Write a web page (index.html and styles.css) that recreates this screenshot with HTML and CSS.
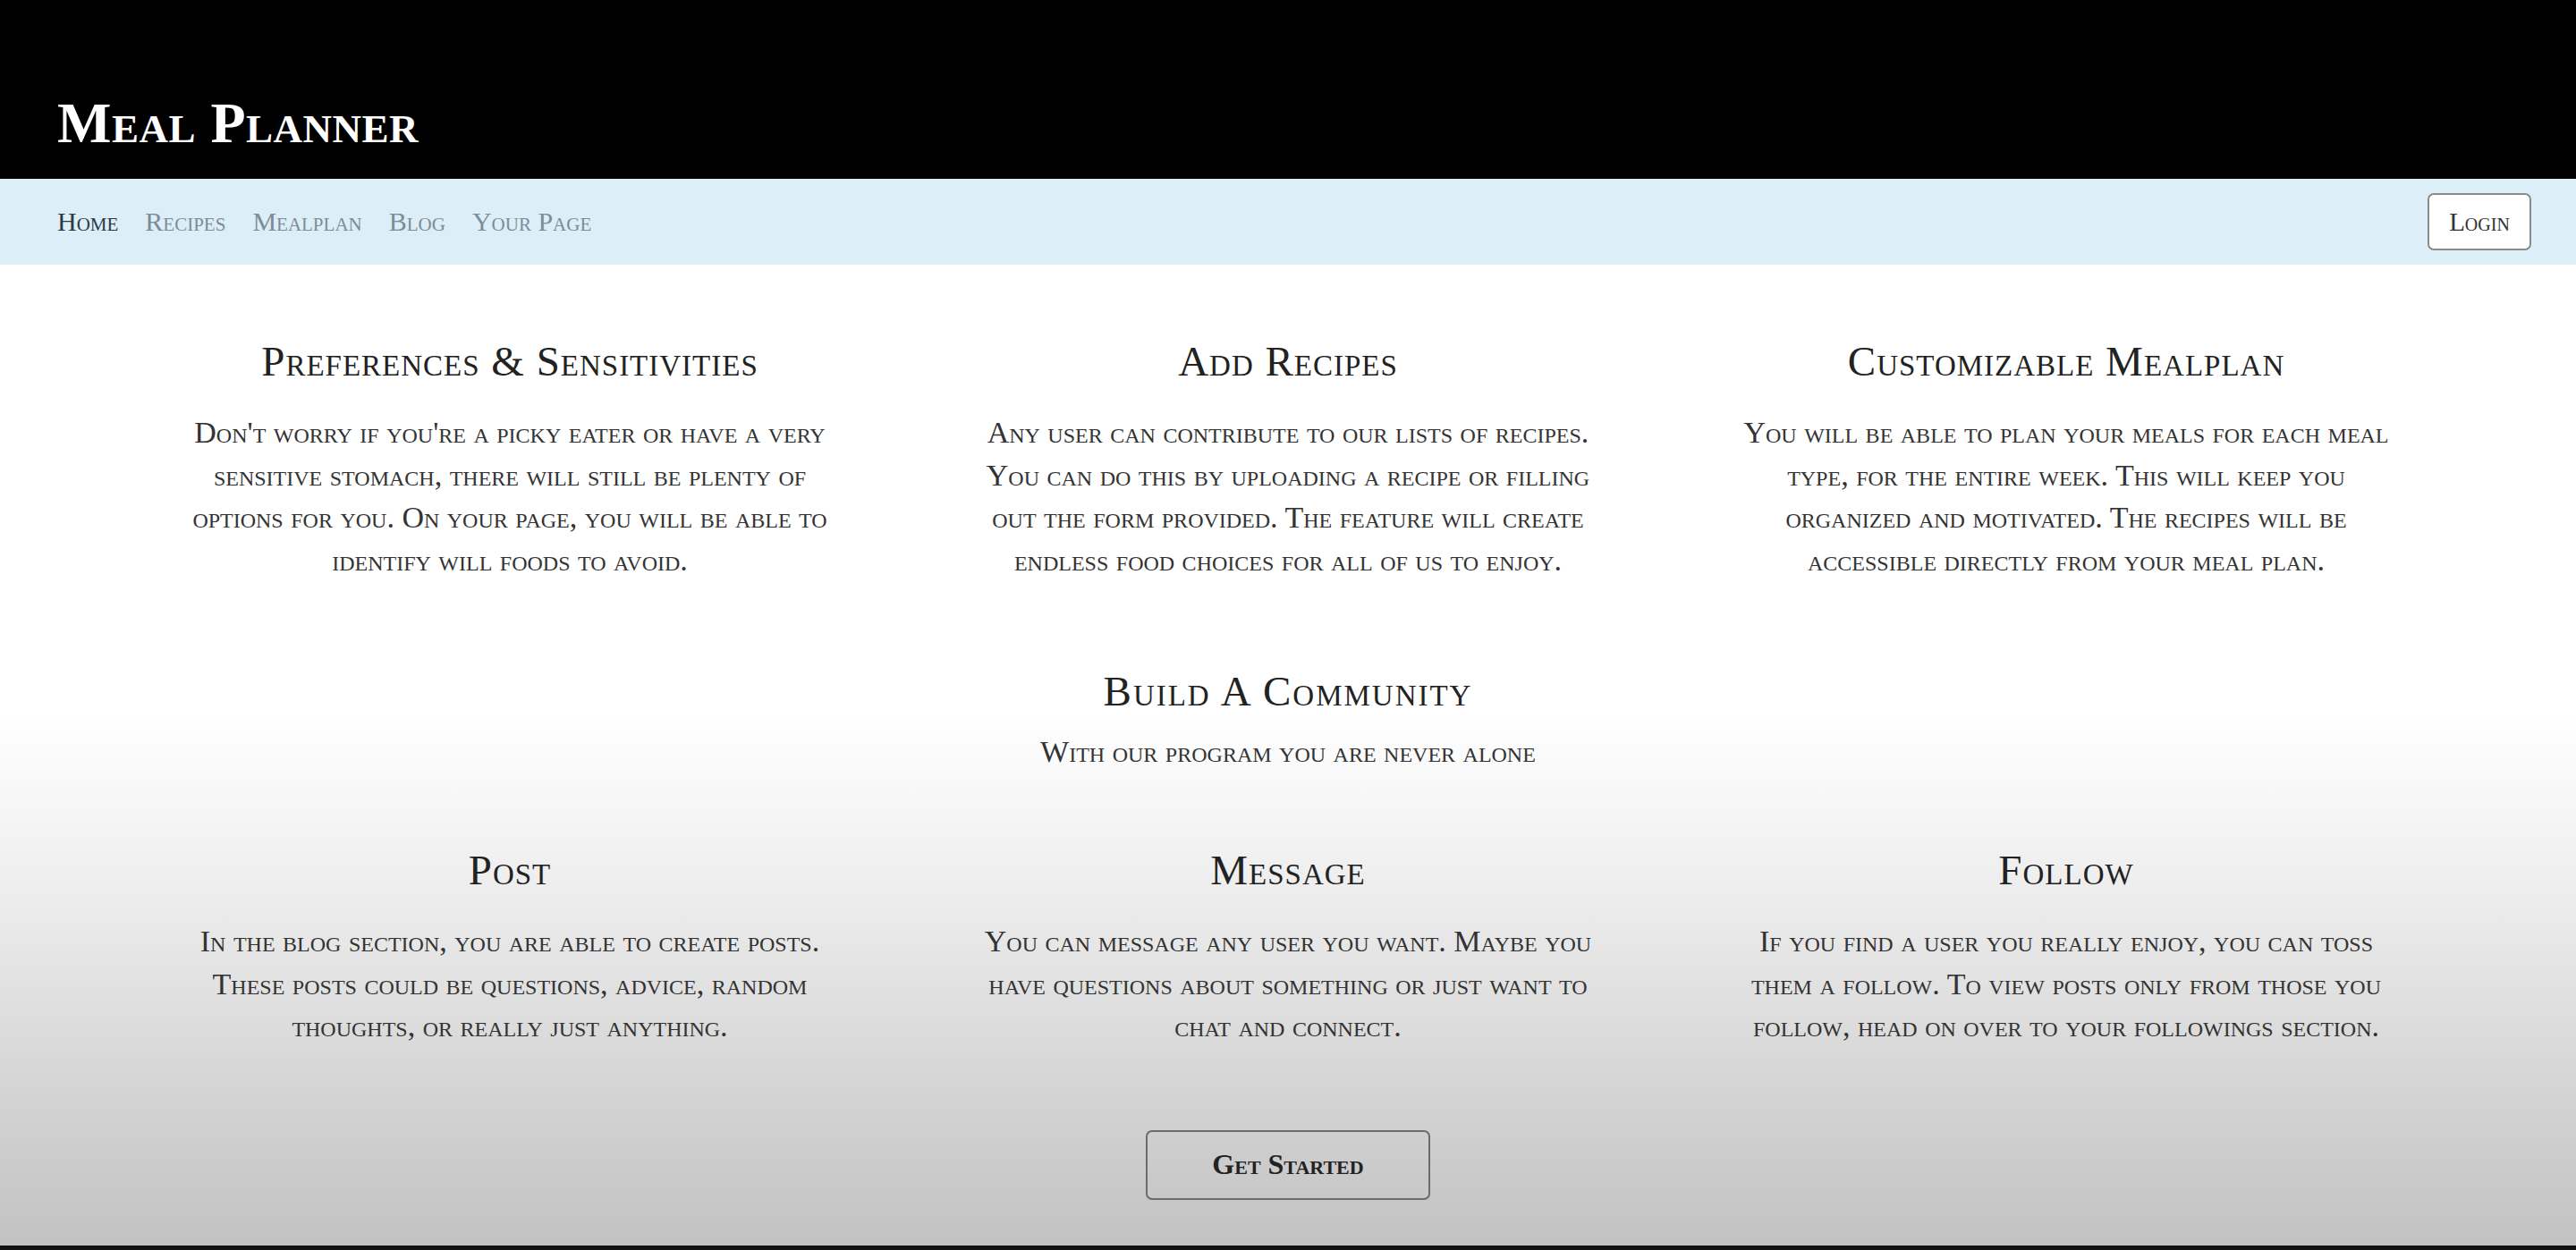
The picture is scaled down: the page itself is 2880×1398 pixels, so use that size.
FILE: index.html
```html
<!DOCTYPE html>
<html lang="en">
<head>
<meta charset="utf-8">
<title>Meal Planner</title>
<link rel="stylesheet" href="styles.css">
</head>
<body>
<div class="page">
  <header class="masthead">
    <h1 class="brand">Meal Planner</h1>
  </header>
  <nav class="navbar">
    <ul class="nav-links">
      <li><a class="nav-link active" href="#">Home</a></li>
      <li><a class="nav-link" href="#">Recipes</a></li>
      <li><a class="nav-link" href="#">Mealplan</a></li>
      <li><a class="nav-link" href="#">Blog</a></li>
      <li><a class="nav-link" href="#">Your Page</a></li>
    </ul>
    <button class="login-btn" type="button">Login</button>
  </nav>
  <main class="content">
    <section class="features">
      <div class="feature">
        <h2 class="feature-title">Preferences &amp; Sensitivities</h2>
        <p class="feature-text">Don't worry if you're a picky eater or have a very sensitive stomach, there will still be plenty of options for you. On your page, you will be able to identify will foods to avoid.</p>
      </div>
      <div class="feature">
        <h2 class="feature-title">Add Recipes</h2>
        <p class="feature-text">Any user can contribute to our lists of recipes. You can do this by uploading a recipe or filling out the form provided. The feature will create endless food choices for all of us to enjoy.</p>
      </div>
      <div class="feature">
        <h2 class="feature-title">Customizable Mealplan</h2>
        <p class="feature-text">You will be able to plan your meals for each meal type, for the entire week. This will keep you organized and motivated. The recipes will be accessible directly from your meal plan.</p>
      </div>
    </section>
    <section class="community">
      <h2 class="feature-title">Build A Community</h2>
      <p class="community-sub">With our program you are never alone</p>
    </section>
    <section class="features features-second">
      <div class="feature">
        <h2 class="feature-title">Post</h2>
        <p class="feature-text">In the blog section, you are able to create posts. These posts could be questions, advice, random thoughts, or really just anything.</p>
      </div>
      <div class="feature">
        <h2 class="feature-title">Message</h2>
        <p class="feature-text">You can message any user you want. Maybe you have questions about something or just want to chat and connect.</p>
      </div>
      <div class="feature">
        <h2 class="feature-title">Follow</h2>
        <p class="feature-text">If you find a user you really enjoy, you can toss them a follow. To view posts only from those you follow, head on over to your followings section.</p>
      </div>
    </section>
    <div class="cta">
      <button class="cta-btn" type="button">Get Started</button>
    </div>
  </main>
  <footer class="bottom-bar"></footer>
</div>
</body>
</html>
```

FILE: styles.css
```css
* { box-sizing: border-box; }

html, body {
  margin: 0;
  padding: 0;
}

body {
  font-family: "Liberation Serif", "Times New Roman", serif;
  font-variant: small-caps;
  color: #2f2f2f;
  background: #000;
}

.page {
  min-height: 100vh;
  display: flex;
  flex-direction: column;
}

.masthead {
  background: #000;
  height: 200px;
  display: flex;
  align-items: flex-end;
  padding: 0 0 30px 64px;
}

.brand {
  margin: 0;
  color: #fff;
  font-size: 64px;
  font-weight: bold;
  line-height: 1;
  letter-spacing: 0.5px;
}

.navbar {
  background: #dceef8;
  height: 96px;
  display: flex;
  align-items: center;
  justify-content: space-between;
  padding: 0 50px 0 64px;
}

.nav-links {
  list-style: none;
  margin: 0;
  padding: 0;
  display: flex;
  gap: 30px;
}

.nav-link {
  font-size: 30px;
  color: #7d8c97;
  text-decoration: none;
}

.nav-link.active {
  color: #2c3a42;
}

.login-btn {
  font-family: inherit;
  font-variant: small-caps;
  font-size: 29px;
  color: #333;
  background: #fff;
  border: 2px solid #8a8a8a;
  border-radius: 7px;
  width: 116px;
  height: 64px;
  padding: 0;
}

.content {
  flex: 1;
  background: linear-gradient(to bottom, #ffffff 0%, #ffffff 46%, #ececec 65%, #d3d3d3 85%, #c2c2c2 100%);
  padding-top: 82px;
  display: flex;
  flex-direction: column;
}

.features {
  display: grid;
  grid-template-columns: repeat(3, 870px);
  justify-content: center;
}

.feature {
  text-align: center;
  padding: 0 72px;
}

.feature-title {
  margin: 0 0 30px;
  font-size: 47px;
  font-weight: normal;
  line-height: 52px;
  letter-spacing: 1px;
  color: #222;
}

.feature-text {
  margin: 0;
  font-size: 34px;
  line-height: 47.7px;
  color: #333;
}

.community {
  text-align: center;
  margin-top: 96px;
}

.community .feature-title {
  margin-bottom: 18px;
  letter-spacing: 2px;
}

.community-sub {
  margin: 0;
  font-size: 34px;
  line-height: 48px;
  color: #333;
}

.features-second {
  margin-top: 82px;
}

.cta {
  display: flex;
  justify-content: center;
  margin-top: 92px;
}

.cta-btn {
  font-family: inherit;
  font-variant: small-caps;
  font-weight: bold;
  font-size: 32px;
  color: #222;
  background: transparent;
  border: 2px solid #6b6b6b;
  border-radius: 7px;
  width: 318px;
  height: 78px;
  padding: 0;
}

.bottom-bar {
  height: 5px;
  background: #111;
}
```
